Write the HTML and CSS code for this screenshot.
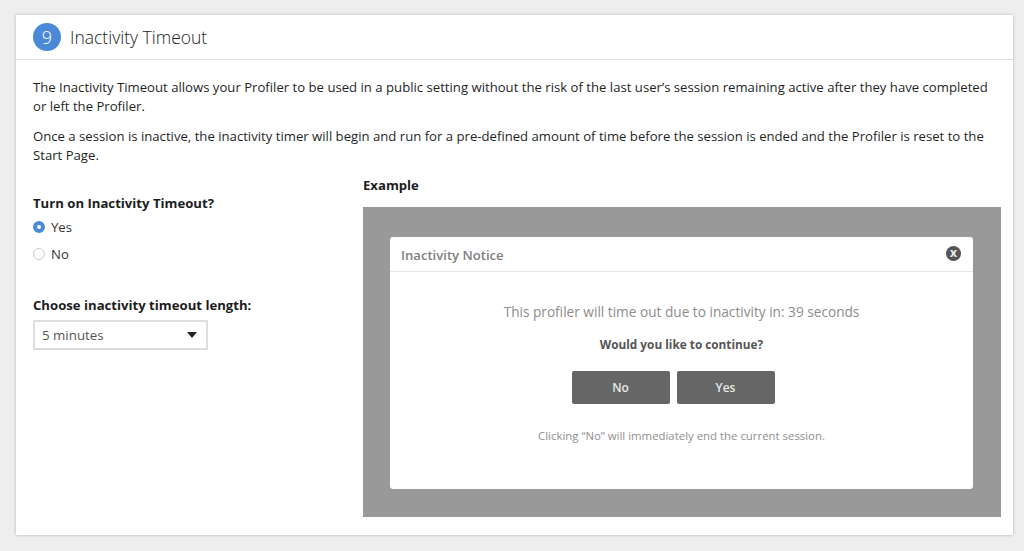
FILE: index.html
```html
<!DOCTYPE html>
<html lang="en">
<head>
<meta charset="utf-8">
<title>Inactivity Timeout</title>
<link rel="stylesheet" href="styles.css">
</head>
<body>
<main class="card">
  <header class="card-head">
    <span class="step">9</span>
    <h1 class="title">Inactivity Timeout</h1>
  </header>
  <div class="card-body">
    <p class="intro">The Inactivity Timeout allows your Profiler to be used in a public setting without the risk of the last user’s session remaining active after they have completed or left the Profiler.</p>
    <p class="intro second">Once a session is inactive, the inactivity timer will begin and run for a pre-defined amount of time before the session is ended and the Profiler is reset to the Start Page.</p>
    <div class="columns">
      <section class="options">
        <h2 class="label">Turn on Inactivity Timeout?</h2>
        <div class="radio-row first"><span class="radio on"></span><span>Yes</span></div>
        <div class="radio-row"><span class="radio"></span><span>No</span></div>
        <h2 class="label choose">Choose inactivity timeout length:</h2>
        <div class="select"><span>5 minutes</span><span class="caret"></span></div>
      </section>
      <section class="example">
        <h2 class="label example-label">Example</h2>
        <div class="overlay">
          <div class="dialog">
            <div class="dialog-head">
              <span class="dialog-title">Inactivity Notice</span>
              <span class="close">x</span>
            </div>
            <div class="dialog-body">
              <p class="countdown">This profiler will time out due to inactivity in: 39 seconds</p>
              <p class="question">Would you like to continue?</p>
              <div class="buttons">
                <span class="btn">No</span>
                <span class="btn">Yes</span>
              </div>
              <p class="note">Clicking “No” will immediately end the current session.</p>
            </div>
          </div>
        </div>
      </section>
    </div>
  </div>
</main>
</body>
</html>
```

FILE: styles.css
```css
* { box-sizing: border-box; }
html, body { height: 100%; }
body {
  margin: 0;
  padding: 15px 11px 16px 16px;
  background: #eeeeee;
  font-family: "Open Sans", "Liberation Sans", sans-serif;
  color: #1f1f1f;
  overflow: hidden;
}
h1, h2, p { margin: 0; }
.card {
  height: 520px;
  background: #fff;
  box-shadow: 0 0 3px rgba(0, 0, 0, .25);
}
.card-head {
  height: 45px;
  display: flex;
  align-items: center;
  gap: 9px;
  padding: 0 17px;
  border-bottom: 1px solid #dddddd;
}
.step {
  width: 28px;
  height: 28px;
  border-radius: 50%;
  background: #4a89d8;
  color: #fff;
  display: flex;
  align-items: center;
  justify-content: center;
  font-size: 18px;
  font-weight: 300;
}
.title {
  font-size: 17.5px;
  font-weight: 300;
  color: #222;
}
.card-body { padding: 18px 12px 0 17px; }
.intro {
  font-size: 13.15px;
  line-height: 18.5px;
}
.second { margin-top: 12px; }
.columns {
  display: flex;
  margin-top: 12px;
}
.options {
  width: 330px;
  flex: none;
  padding-top: 18px;
}
.example { flex: 1; }
.label {
  font-size: 13.15px;
  font-weight: 700;
  line-height: 18px;
  color: #1c1c1c;
}
.example-label { margin-bottom: 13px; }
.radio-row {
  display: flex;
  align-items: center;
  gap: 6px;
  height: 27px;
  font-size: 13.15px;
  color: #333;
}
.radio-row.first { margin-top: 1px; }
.radio {
  width: 12px;
  height: 12px;
  border-radius: 50%;
  border: 1px solid #cccccc;
  background: #fff;
}
.radio.on {
  border: 4px solid #4a89d8;
}
.choose { margin-top: 29px; }
.select {
  margin-top: 6px;
  width: 175px;
  height: 30px;
  border: 2px solid #dedede;
  display: flex;
  align-items: center;
  justify-content: space-between;
  padding: 0 9px 0 7px;
  font-size: 13.3px;
  color: #555;
}
.caret {
  width: 0;
  height: 0;
  border-left: 5.5px solid transparent;
  border-right: 5.5px solid transparent;
  border-top: 6px solid #222;
}
.overlay {
  height: 310px;
  background: #999999;
  padding: 30px 28px 28px 27px;
}
.dialog {
  height: 252px;
  background: #fff;
  border-radius: 3px;
}
.dialog-head {
  height: 35px;
  display: flex;
  align-items: center;
  justify-content: space-between;
  padding: 2px 12px 0 11px;
  border-bottom: 1px solid #e6e6e6;
}
.dialog-title {
  font-size: 13.1px;
  font-weight: 600;
  color: #808080;
}
.close {
  width: 15px;
  height: 15px;
  border-radius: 50%;
  background: #555;
  color: #eee;
  font-size: 12px;
  font-weight: 700;
  line-height: 13px;
  text-align: center;
  margin-top: -4px;
}
.dialog-body {
  display: flex;
  flex-direction: column;
  align-items: center;
}
.countdown {
  margin-top: 31px;
  font-size: 13.65px;
  line-height: 18px;
  font-weight: 500;
  color: #8c8c8c;
}
.question {
  margin-top: 14px;
  font-size: 11.8px;
  line-height: 18px;
  font-weight: 700;
  color: #555;
}
.buttons {
  display: flex;
  gap: 7px;
  margin: 18px 17px 0 0;
}
.btn {
  width: 98px;
  height: 33px;
  display: flex;
  align-items: center;
  justify-content: center;
  background: #666666;
  border-radius: 2px;
  color: #e8e8e8;
  font-size: 12px;
  font-weight: 600;
}
.note {
  margin-top: 24px;
  font-size: 11.4px;
  line-height: 16px;
  color: #8f8f8f;
}
```
